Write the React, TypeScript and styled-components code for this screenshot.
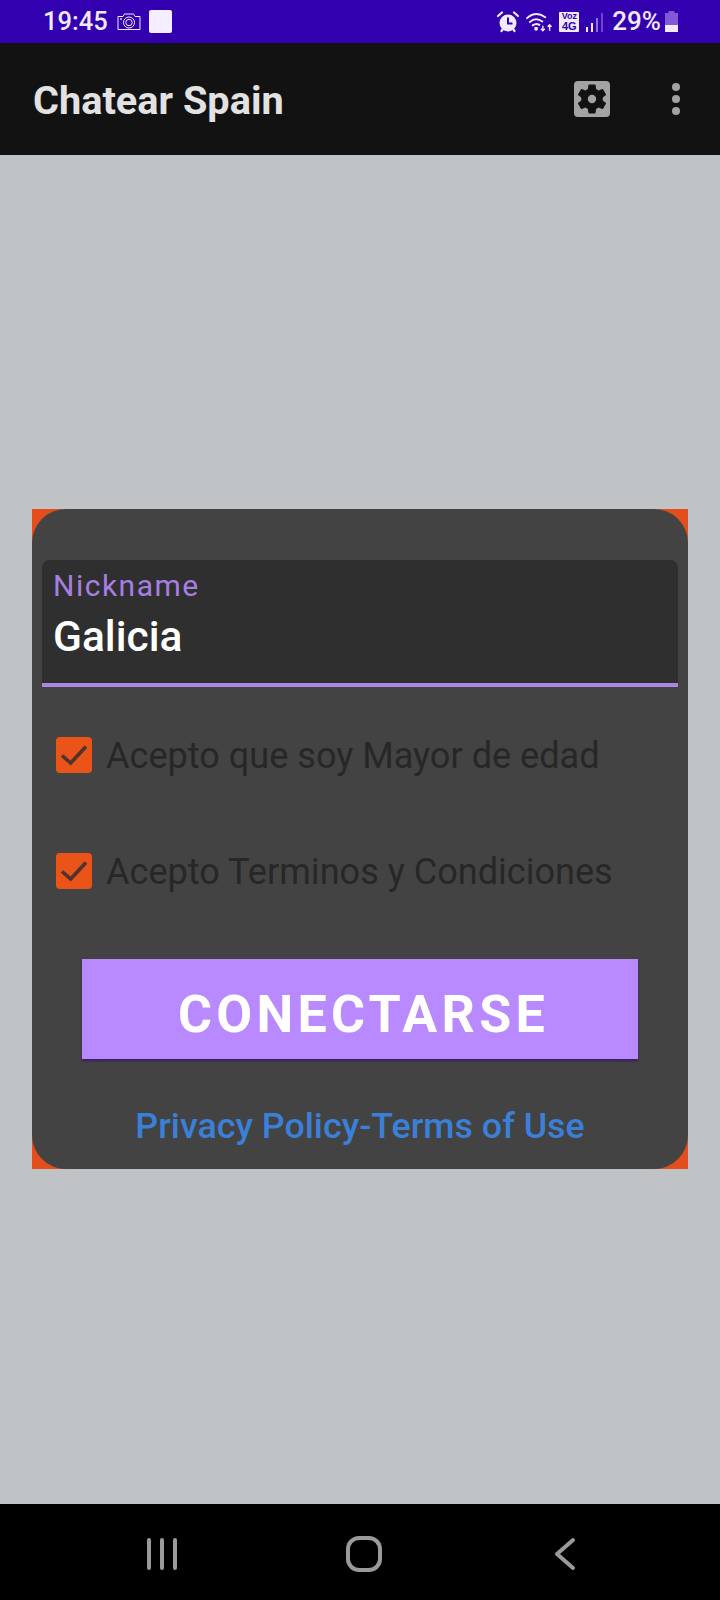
import React from "react";
import styled, { createGlobalStyle } from "styled-components";

const Global = createGlobalStyle`
  html, body { margin: 0; padding: 0; background: #bfc3c6; }
  body { font-family: Roboto, "Liberation Sans", sans-serif; }
`;

const Page = styled.div`
  width: 720px;
  height: 1600px;
  display: flex;
  flex-direction: column;
  background: #bfc3c6;
  overflow: hidden;
`;

const StatusBar = styled.div`
  height: 43px;
  flex: none;
  background: #3300b0;
  color: #f1e9fd;
  display: flex;
  align-items: center;
  padding: 0 42px 0 43px;
  box-sizing: border-box;
`;

const Time = styled.span`
  font-size: 25.5px;
  font-weight: 500;
  line-height: 43px;
  margin-right: 9px;
`;

const StatusGroup = styled.div`
  display: flex;
  align-items: center;
  gap: 7px;
  margin-right: 4px;
`;

const Spacer = styled.div`
  flex: 1;
`;

const Battery = styled.span`
  font-size: 26px;
  font-weight: 500;
  line-height: 43px;
  margin-left: 1px;
`;

const AppBar = styled.header`
  height: 112px;
  flex: none;
  background: #121212;
  display: flex;
  align-items: center;
  padding: 0 39px 0 33px;
  box-sizing: border-box;
`;

const Title = styled.h1`
  margin: 0;
  padding-top: 3px;
  font-size: 39.7px;
  font-weight: 700;
  color: #e2e2e2;
  flex: 1;
`;

const SettingsButton = styled.div`
  width: 36px;
  height: 36px;
  border-radius: 4px;
  background: #a3a3a3;
  display: flex;
  align-items: center;
  justify-content: center;
  margin-right: 61px;
`;

const Main = styled.main`
  flex: 1;
  padding: 354px 32px 0;
`;

const Card = styled.section`
  height: 660px;
  background: #e44d1c;
`;

const CardInner = styled.div`
  height: 100%;
  box-sizing: border-box;
  background: #434343;
  border-radius: 34px;
  padding: 51px 10px 0;
  display: flex;
  flex-direction: column;
`;

const Field = styled.div`
  height: 127px;
  box-sizing: border-box;
  background: #2f2f2f;
  border-radius: 8px 8px 0 0;
  border-bottom: 4px solid #ab87e0;
  padding: 8px 11px 0;
`;

const FieldLabel = styled.div`
  font-size: 30px;
  line-height: 36px;
  letter-spacing: 1.5px;
  color: #a77fe0;
`;

const FieldValue = styled.div`
  font-size: 42.5px;
  line-height: 50px;
  font-weight: 500;
  color: #ffffff;
  margin-top: 8px;
`;

const CheckRow = styled.label<{ $top: number }>`
  display: flex;
  align-items: center;
  gap: 14px;
  height: 36px;
  margin: ${(p) => p.$top}px 0 0 14px;
`;

const CheckBox = styled.span`
  width: 36px;
  height: 36px;
  flex: none;
  border-radius: 4px;
  background: #ea5419;
  display: flex;
`;

const CheckText = styled.span`
  font-size: 36.1px;
  color: #272727;
  white-space: nowrap;
  padding-top: 2px;
`;

const ConnectButton = styled.button`
  display: block;
  width: 556px;
  height: 100px;
  margin: 70px 0 0 40px;
  padding: 11px 0 0 7px;
  border: 0;
  border-radius: 0;
  background: #b98aff;
  box-shadow: 0 2px 2px rgba(60, 20, 110, 0.8);
  color: #ffffff;
  font-family: inherit;
  font-size: 52px;
  font-weight: 700;
  letter-spacing: 4.3px;
`;

const PolicyLink = styled.a`
  display: block;
  text-align: center;
  margin-top: 45px;
  font-size: 35.8px;
  line-height: 44px;
  font-weight: 500;
  color: #3a80d8;
  text-decoration: none;
`;

const NavBar = styled.nav`
  height: 96px;
  flex: none;
  background: #000;
  display: grid;
  grid-template-columns: 146px 32px 168px 36px 172px 22px;
  align-items: center;
  padding-top: 4px;
  box-sizing: border-box;
`;

const NavSlot = styled.div`
  display: flex;
  align-items: center;
  justify-content: center;
  height: 36px;
`;

const Check = () => (
  <svg width="36" height="36" viewBox="0 0 36 36" fill="none">
    <path d="M6 18.500 L14.700 26 L30 9.500" stroke="#4e332e" strokeWidth="3.600" />
  </svg>
);

const Camera = () => (
  <svg width="24" height="17" viewBox="0 0 24 17" fill="none" stroke="#f1e9fd" strokeWidth="1">
    <path d="M1 3.500h5l1.500-2.500h9L18 3.500h5v13H1z" />
    <circle cx="12" cy="9.500" r="5.500" />
    <circle cx="12" cy="9.500" r="3.200" />
    <circle cx="4" cy="6" r=".6" />
  </svg>
);

const WhiteSquare = styled.span`
  width: 23px;
  height: 23px;
  border-radius: 2px;
  background: #f4eefe;
  margin-left: 8px;
`;

const Alarm = () => (
  <svg width="22" height="22" viewBox="0 0 22 22">
    <circle cx="11" cy="12" r="8.500" fill="#f1e9fd" />
    <path d="M1 5 L5 1.500 M21 5 L17 1.500 M4.500 20 L6 18 M17.500 20 L16 18" stroke="#f1e9fd" strokeWidth="2.200" strokeLinecap="round" />
    <path d="M11 6.500V12.500H15.500" stroke="#3300b0" strokeWidth="2" fill="none" />
  </svg>
);

const Wifi = () => (
  <svg width="26" height="20" viewBox="0 0 27 20" fill="none" stroke="#f1e9fd" strokeWidth="2" strokeLinecap="round">
    <path d="M1 6 Q10 -2 20 5" />
    <path d="M4 10 Q10 4.500 17 9.500" />
    <path d="M7 13.500 Q10.500 11 14 13" />
    <circle cx="10.500" cy="17" r="1" fill="#f1e9fd" />
    <path d="M17.500 14v5M15.500 17l2 2 2-2M24.500 19v-6M22.500 15l2-2 2 2" strokeWidth="1.500" strokeLinecap="butt" />
  </svg>
);

const VolteBadge = styled.span`
  width: 20px;
  height: 20px;
  background: #f1e9fd;
  border-radius: 1px;
  color: #3300b0;
  font-family: "Liberation Sans", sans-serif;
  font-weight: 700;
  display: flex;
  flex-direction: column;
  align-items: center;
  justify-content: center;
`;

const VolteTop = styled.span`
  font-size: 9px;
  line-height: 9px;
`;

const VolteBottom = styled.span`
  font-size: 11px;
  line-height: 10px;
`;

const Signal = () => (
  <svg width="18" height="20" viewBox="0 0 18 20">
    <rect x="0" y="15" width="2" height="5" fill="#f1e9fd" />
    <rect x="5" y="11" width="2" height="9" fill="#f1e9fd" />
    <rect x="10" y="6" width="2" height="14" fill="#8d6fdc" />
    <rect x="15" y="1" width="2" height="19" fill="#6f45cc" />
  </svg>
);

const BatteryIcon = () => (
  <svg width="13" height="21" viewBox="0 0 13 21">
    <path d="M3.500 0h6v2h3.500v19H0V2h3.500z" fill="#8258d8" />
    <rect y="14" width="13" height="7" fill="#f1e9fd" />
  </svg>
);

const Gear = () => (
  <svg width="36" height="36" viewBox="0 0 24 24">
    <path
      fill="#121212"
      d="M19.140 12.940c.04-.3.060-.61.060-.94s-.020-.64-.070-.94l2.030-1.580a.49.49 0 0 0 .12-.61l-1.920-3.320a.49.49 0 0 0-.59-.22l-2.390.96c-.5-.38-1.030-.7-1.620-.94l-.36-2.540a.48.480 0 0 0-.48-.41h-3.840a.47.47 0 0 0-.47.410l-.36 2.540c-.59.240-1.130.57-1.620.94l-2.390-.96a.48.480 0 0 0-.59.220L2.740 8.870a.47.470 0 0 0 .12.610l2.030 1.580c-.05.3-.090.630-.090.940s.020.640.070.940l-2.030 1.580a.49.49 0 0 0-.12.610l1.920 3.320c.12.220.37.290.59.220l2.390-.96c.5.380 1.030.7 1.620.94l.36 2.540c.05.240.24.410.48.410h3.840c.24 0 .44-.17.470-.41l.36-2.540c.59-.24 1.130-.56 1.620-.94l2.390.96c.22.080.47 0 .59-.22l1.920-3.320a.47.470 0 0 0-.12-.61l-2.010-1.580zM12 14.800a2.800 2.800 0 1 1 0-5.600 2.800 2.800 0 0 1 0 5.600z"
    />
  </svg>
);

const Kebab = () => (
  <svg width="10" height="34" viewBox="0 0 10 34" fill="#a3a3a3">
    <circle cx="5" cy="5" r="4" />
    <circle cx="5" cy="17" r="4" />
    <circle cx="5" cy="29" r="4" />
  </svg>
);

const Recents = () => (
  <svg width="32" height="34" viewBox="0 0 32 34" stroke="#9a9a9a" strokeWidth="4" strokeLinecap="round">
    <path d="M3 3v28M16 3v28M29 3v28" />
  </svg>
);

const Home = () => (
  <svg width="36" height="36" viewBox="0 0 36 36" fill="none" stroke="#9a9a9a" strokeWidth="4">
    <rect x="2" y="2" width="32" height="32" rx="11" />
  </svg>
);

const Back = () => (
  <svg width="22" height="34" viewBox="0 0 22 34" fill="none" stroke="#9a9a9a" strokeWidth="4" strokeLinecap="round" strokeLinejoin="round">
    <path d="M19 3 L3 17 L19 31" />
  </svg>
);

export default function App() {
  return (
    <Page>
      <Global />
      <StatusBar>
        <Time>19:45</Time>
        <Camera />
        <WhiteSquare />
        <Spacer />
        <StatusGroup>
          <Alarm />
          <Wifi />
          <VolteBadge>
            <VolteTop>Voz</VolteTop>
            <VolteBottom>4G</VolteBottom>
          </VolteBadge>
          <Signal />
          <Battery>29%</Battery>
        </StatusGroup>
        <BatteryIcon />
      </StatusBar>
      <AppBar>
        <Title>Chatear Spain</Title>
        <SettingsButton>
          <Gear />
        </SettingsButton>
        <Kebab />
      </AppBar>
      <Main>
        <Card>
          <CardInner>
            <Field>
              <FieldLabel>Nickname</FieldLabel>
              <FieldValue>Galicia</FieldValue>
            </Field>
            <CheckRow $top={50}>
              <CheckBox>
                <Check />
              </CheckBox>
              <CheckText>Acepto que soy Mayor de edad</CheckText>
            </CheckRow>
            <CheckRow $top={80}>
              <CheckBox>
                <Check />
              </CheckBox>
              <CheckText>Acepto Terminos y Condiciones</CheckText>
            </CheckRow>
            <ConnectButton>CONECTARSE</ConnectButton>
            <PolicyLink>Privacy Policy-Terms of Use</PolicyLink>
          </CardInner>
        </Card>
      </Main>
      <NavBar>
        <span />
        <NavSlot>
          <Recents />
        </NavSlot>
        <span />
        <NavSlot>
          <Home />
        </NavSlot>
        <span />
        <NavSlot>
          <Back />
        </NavSlot>
      </NavBar>
    </Page>
  );
}
